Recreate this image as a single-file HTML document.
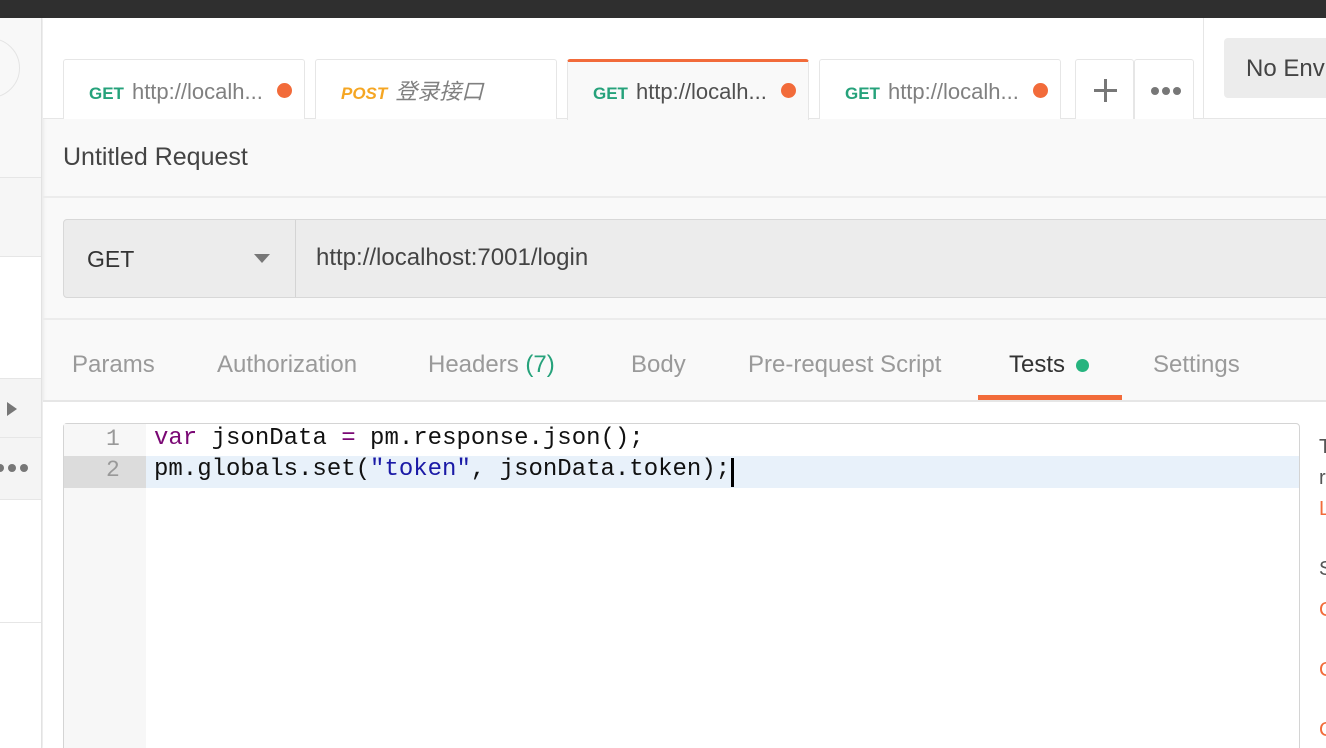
<!DOCTYPE html>
<html><head><meta charset="utf-8"><style>
*{box-sizing:border-box;margin:0;padding:0}
html,body{width:1326px;height:748px;overflow:hidden}
body{background:#f9f9f9;font-family:"Liberation Sans","Noto Sans CJK SC",sans-serif;position:relative}
.a{position:absolute}
.tab{position:absolute;top:59px;height:60px;background:#fff;border:1px solid #e6e6e6;border-bottom:none;border-radius:3px 3px 0 0;font-size:22px;line-height:26px;color:#808080;padding:19px 0 0 25px;white-space:nowrap}
.tab b{font-size:17px;color:#26a27b;margin-right:8px}
.dot{position:absolute;right:12px;top:23px;width:15px;height:15px;border-radius:50%;background:#f26b3a}
.st{position:absolute;top:351px;font-size:24px;color:#9a9a9a}
.code{position:absolute;left:154px;font-family:"Liberation Mono",monospace;font-size:24px;color:#111}
.ln{position:absolute;left:106px;font-family:"Liberation Mono",monospace;font-size:23px;color:#999}
.rt{position:absolute;left:1319px;font-size:20px;color:#555}
</style></head><body>
<div class="a" style="left:0;top:0;width:1326px;height:18px;background:#2f2f2f"></div>
<div class="a" style="left:0;top:18px;width:42px;height:730px;background:#fff;border-right:1px solid #e2e2e2;box-shadow:2px 0 3px rgba(0,0,0,.06)">
 <div class="a" style="left:0;top:0;width:41px;height:160px;background:#f8f8f8;border-bottom:1px solid #e6e6e6"></div>
 <div class="a" style="left:-40px;top:20px;width:60px;height:60px;border-radius:50%;border:1px solid #e4e4e4"></div>
 <div class="a" style="left:0;top:160px;width:41px;height:79px;background:#f6f6f6;border-bottom:1px solid #e6e6e6"></div>
 <div class="a" style="left:0;top:360px;width:41px;height:60px;background:#f4f4f4;border-top:1px solid #e6e6e6;border-bottom:1px solid #e6e6e6"></div>
 <div class="a" style="left:0;top:420px;width:41px;height:62px;background:#f4f4f4;border-bottom:1px solid #e6e6e6"></div>
 <div class="a" style="left:7px;top:384px;width:0;height:0;border-left:10px solid #777;border-top:7px solid transparent;border-bottom:7px solid transparent"></div>
 <div class="a" style="left:-4px;top:446px;width:8px;height:8px;border-radius:50%;background:#777;box-shadow:12px 0 0 #777,24px 0 0 #777"></div>
 <div class="a" style="left:0;top:604px;width:41px;height:1px;background:#e6e6e6"></div>
</div>
<div class="a" style="left:43px;top:18px;width:1283px;height:101px;background:#fff;border-bottom:1px solid #e6e6e6"></div>
<div class="tab" style="left:63px;width:242px"><b>GET</b>http://localh...<span class="dot"></span></div>
<div class="tab" style="left:315px;width:242px"><b style="color:#f5a623;font-style:italic">POST</b><i>登录接口</i></div>
<div class="tab" style="left:567px;width:242px;background:#f9f9f9;border-top:3px solid #f26b3a;padding-top:17px;color:#505050;height:61px"><b>GET</b>http://localh...<span class="dot" style="top:21px"></span></div>
<div class="tab" style="left:819px;width:242px"><b>GET</b>http://localh...<span class="dot"></span></div>
<div class="tab" style="left:1075px;width:59px;padding:0"><div class="a" style="left:18px;top:29px;width:23px;height:3px;background:#777"></div><div class="a" style="left:28px;top:19px;width:3px;height:23px;background:#777"></div></div>
<div class="tab" style="left:1134px;width:60px;padding:0"><div class="a" style="left:16px;top:27px;width:8px;height:8px;border-radius:50%;background:#777;box-shadow:11px 0 0 #777,22px 0 0 #777"></div></div>
<div class="a" style="left:1203px;top:18px;width:1px;height:100px;background:#e6e6e6"></div>
<div class="a" style="left:1224px;top:38px;width:110px;height:60px;background:#ececec;border-radius:4px;font-size:24px;color:#444;padding:17px 0 0 22px;white-space:nowrap">No Env</div>
<div class="a" style="left:63px;top:143px;font-size:25px;color:#444">Untitled Request</div>
<div class="a" style="left:43px;top:196px;width:1283px;height:2px;background:#ececec"></div>
<div class="a" style="left:63px;top:219px;width:1280px;height:79px;background:#ececec;border:1px solid #d8d8d8;border-radius:4px"></div>
<div class="a" style="left:295px;top:220px;width:1px;height:77px;background:#d4d4d4"></div>
<div class="a" style="left:87px;top:246px;font-size:23px;color:#333">GET</div>
<div class="a" style="left:254px;top:254px;border-top:9px solid #777;border-left:8px solid transparent;border-right:8px solid transparent"></div>
<div class="a" style="left:316px;top:244px;font-size:24px;color:#444">http://localhost:7001/login</div>
<div class="a" style="left:43px;top:318px;width:1283px;height:2px;background:#ececec"></div>
<div class="st" style="left:72px">Params</div>
<div class="st" style="left:217px">Authorization</div>
<div class="st" style="left:428px">Headers <span style="color:#26a27b">(7)</span></div>
<div class="st" style="left:631px">Body</div>
<div class="st" style="left:748px">Pre-request Script</div>
<div class="st" style="left:1009px;color:#333">Tests <span style="display:inline-block;width:13px;height:13px;border-radius:50%;background:#26b47f;margin-left:4px"></span></div>
<div class="st" style="left:1153px">Settings</div>
<div class="a" style="left:978px;top:395px;width:144px;height:5px;background:#f26b3a"></div>
<div class="a" style="left:43px;top:400px;width:1283px;height:2px;background:#e6e6e6"></div>
<div class="a" style="left:43px;top:402px;width:1283px;height:346px;background:#fff"></div>
<div class="a" style="left:63px;top:423px;width:1237px;height:340px;border:1px solid #d4d4d4;border-radius:4px;background:#fff"></div>
<div class="a" style="left:64px;top:424px;width:82px;height:330px;background:#f7f7f7"></div>
<div class="a" style="left:64px;top:456px;width:82px;height:32px;background:#dcdcdc"></div>
<div class="a" style="left:146px;top:456px;width:1153px;height:32px;background:#e8f1fa"></div>
<div class="ln" style="top:426px">1</div>
<div class="ln" style="top:457px">2</div>
<div class="code" style="top:425px"><span style="color:#7a0874">var</span> jsonData <span style="color:#7a0874">=</span> pm.response.json();</div>
<div class="code" style="top:456px">pm.globals.set(<span style="color:#1a1aa6">"token"</span>, jsonData.token);</div>
<div class="a" style="left:731px;top:458px;width:3px;height:29px;background:#000"></div>
<div class="rt" style="top:436px">T</div>
<div class="rt" style="top:467px">r</div>
<div class="rt" style="top:498px;color:#f26b3a">L</div>
<div class="rt" style="top:558px">S</div>
<div class="rt" style="top:599px;color:#f26b3a">C</div>
<div class="rt" style="top:659px;color:#f26b3a">C</div>
<div class="rt" style="top:719px;color:#f26b3a">C</div>
</body></html>
